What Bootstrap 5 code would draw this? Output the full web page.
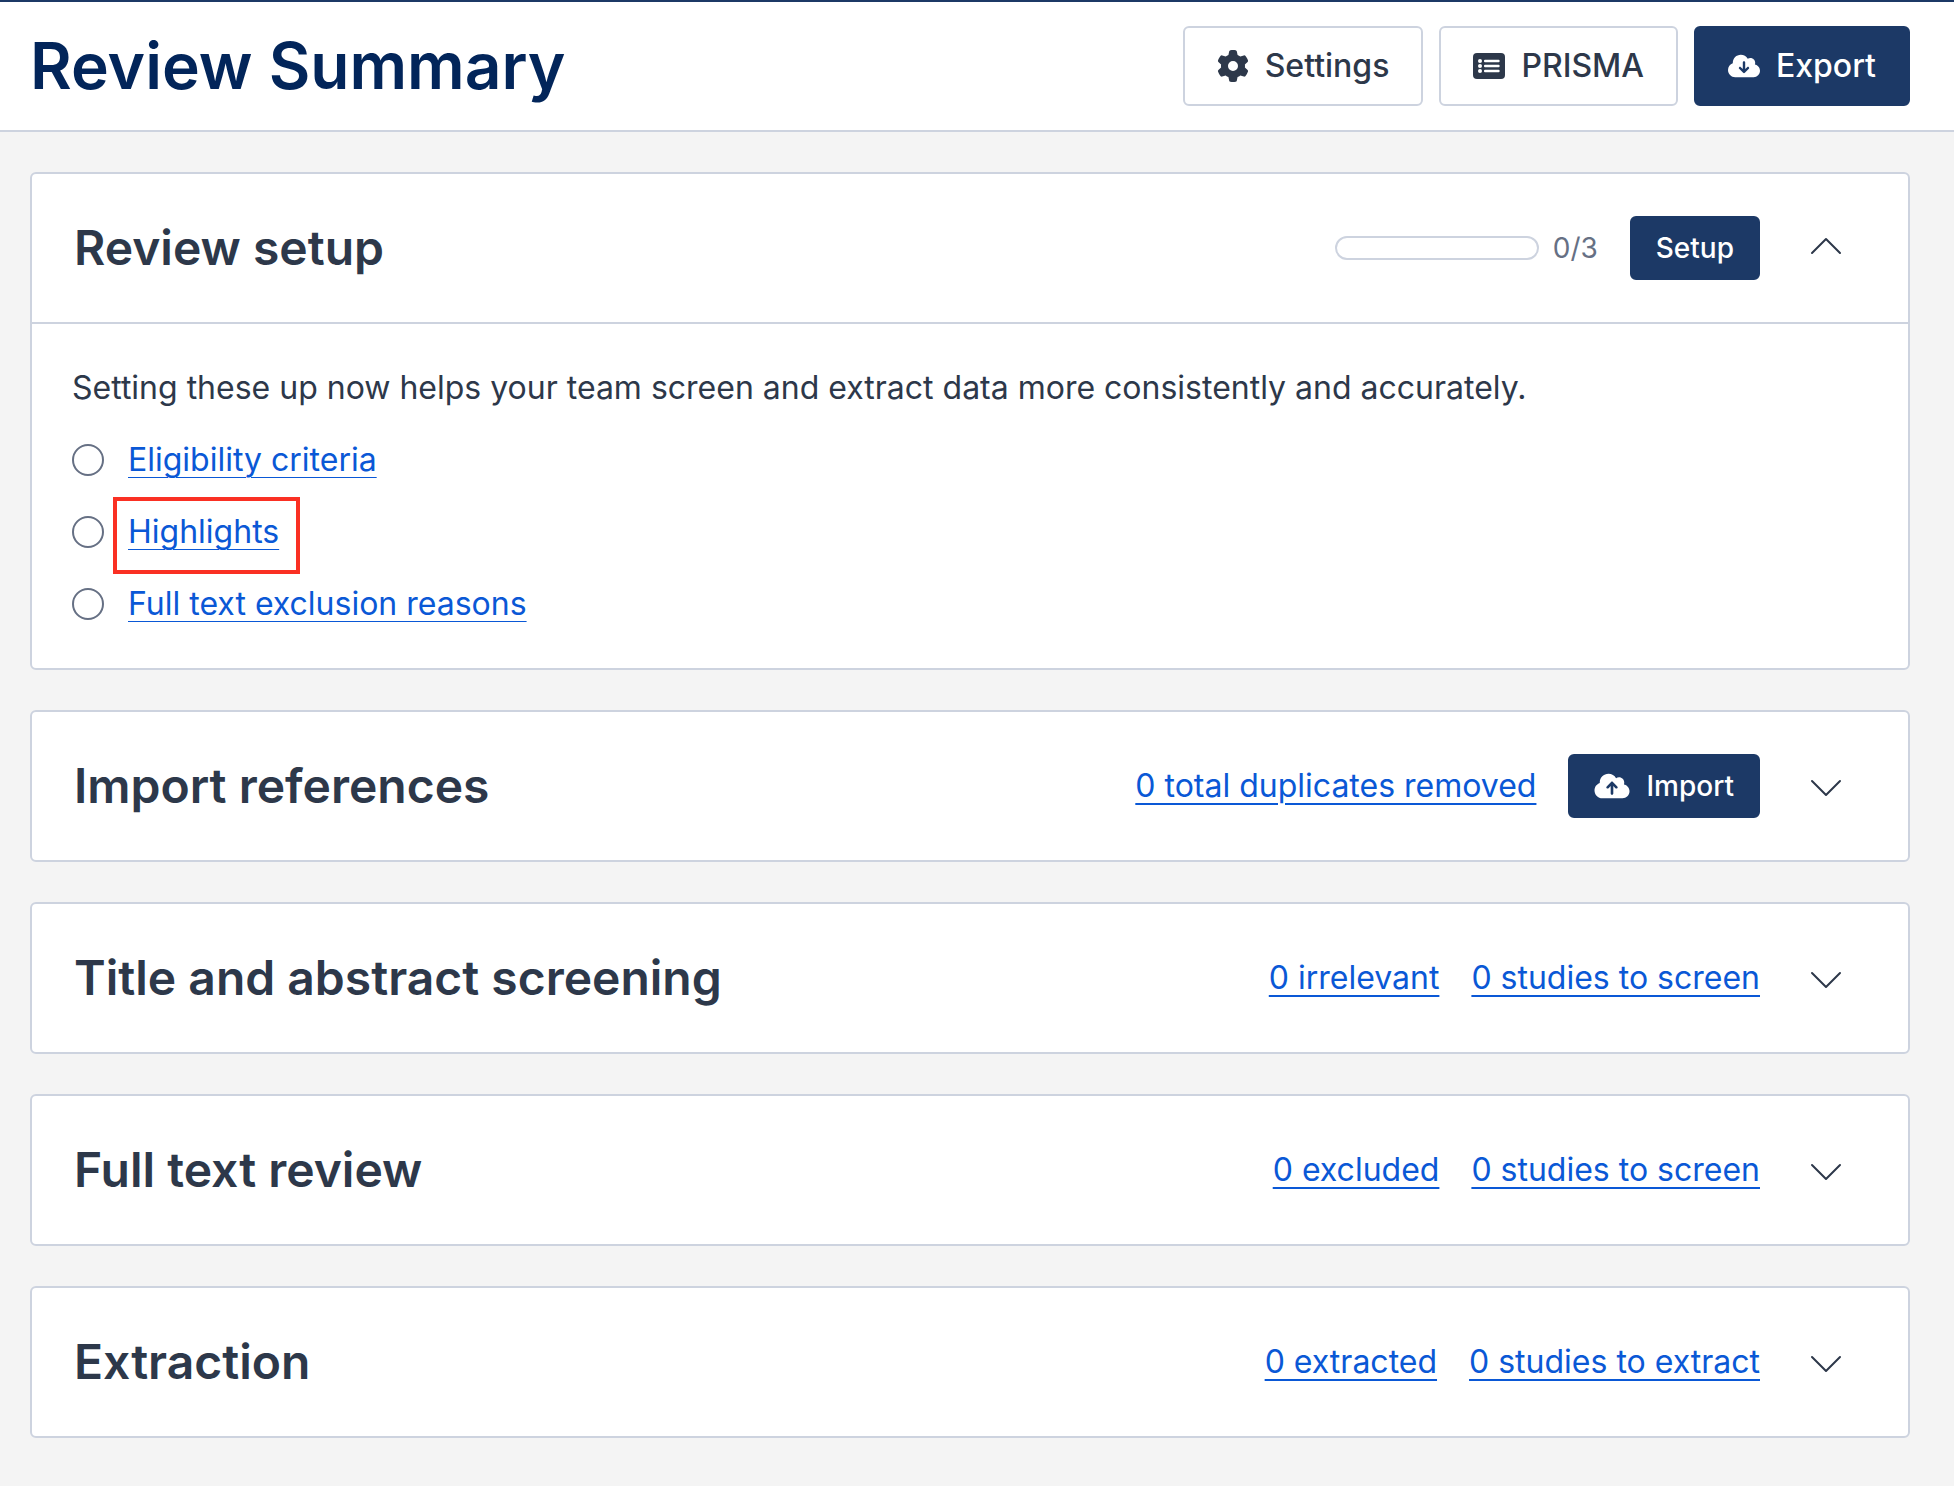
<!DOCTYPE html>
<html lang="en">
<head>
<meta charset="utf-8">
<meta name="viewport" content="width=device-width, initial-scale=1">
<title>Review Summary</title>
<link href="https://cdn.jsdelivr.net/npm/bootstrap@5.3.0/dist/css/bootstrap.min.css" rel="stylesheet">
<style>
  :root { --ink: #2d384a; --navy: #1c3966; --line: #cdd3df; --action: #0a58d6; }
  body { font-family: Inter, "Liberation Sans", sans-serif; font-size: 32px; line-height: 48px; color: var(--ink); background: #f4f4f4; }
  a { color: var(--action); }
  .page-head { border-top: 2px solid var(--navy); border-bottom: 2px solid var(--line); padding: 24px 44px 24px 30px; }
  .page-title { font-size: 64px; line-height: 80px; font-weight: 600; color: #02255a; }
  .page-body { padding: 40px 44px 40px 30px; gap: 40px; }
  .btn { --bs-btn-border-width: 2px; --bs-btn-border-radius: 6px; --bs-btn-font-weight: 500; --bs-btn-line-height: 36px; display: inline-flex; align-items: center; gap: 16px; white-space: nowrap; }
  .btn-tall { --bs-btn-font-size: 32px; --bs-btn-padding-x: 32px; --bs-btn-padding-y: 20px; }
  .btn-short { --bs-btn-font-size: 28px; --bs-btn-padding-x: 24px; --bs-btn-padding-y: 12px; }
  .btn-plain { --bs-btn-color: var(--ink); --bs-btn-bg: #fff; --bs-btn-border-color: var(--line); --bs-btn-hover-bg: #f3f5f9; --bs-btn-hover-border-color: var(--line); }
  .btn-navy { --bs-btn-color: #fff; --bs-btn-bg: var(--navy); --bs-btn-border-color: var(--navy); --bs-btn-hover-color: #fff; --bs-btn-hover-bg: #02255a; --bs-btn-hover-border-color: #02255a; }
  .stage { --bs-card-border-width: 2px; --bs-card-border-color: var(--line); --bs-card-border-radius: 6px; --bs-card-inner-border-radius: 4px; --bs-card-bg: #fff; --bs-card-color: var(--ink); }
  .stage-head { min-height: 148px; padding: 0 58px 0 42px; }
  .stage-title { font-size: 48px; line-height: 60px; font-weight: 600; }
  .stage-tools { gap: 32px; }
  .stage-tools a { text-decoration-thickness: 2px; text-underline-offset: 6px; }
  .stage-body { border-top: 2px solid var(--line); padding: 40px; }
  .tasks { gap: 24px; }
  .tasks li { gap: 24px; }
  .tasks a { text-decoration-thickness: 1px; text-underline-offset: 6px; }
  .called-out { position: relative; }
  .called-out::after { content: ""; position: absolute; inset: -11px -21px -18px -15px; border: 4px solid #fa3023; pointer-events: none; }
  .meter { gap: 14px; font-size: 28px; color: #667084; }
  .meter .progress { width: 204px; height: 24px; background: #fff; border: 2px solid var(--line); border-radius: 12px; }
  .toggler { width: 48px; height: 48px; margin-left: 10px; border: 0; padding: 0; background: none; color: var(--ink); display: flex; align-items: center; justify-content: center; }
  svg { display: block; flex: none; }
</style>
<script src="https://cdn.jsdelivr.net/npm/bootstrap@5.3.0/dist/js/bootstrap.bundle.min.js"></script>
</head>
<body>
<svg width="0" height="0" class="position-absolute" aria-hidden="true">
  <symbol id="up" viewBox="0 0 32 32"><path d="M2 21 16 7l14 14" fill="none" stroke="currentColor" stroke-width="2" stroke-linecap="round" stroke-linejoin="round"/></symbol>
  <symbol id="down" viewBox="0 0 32 32"><path d="M2 11l14 14L30 11" fill="none" stroke="currentColor" stroke-width="2" stroke-linecap="round" stroke-linejoin="round"/></symbol>
  <symbol id="todo" viewBox="0 0 32 32"><circle cx="16" cy="16" r="15" fill="none" stroke="#667084" stroke-width="2"/></symbol>
</svg>

<header class="page-head bg-white d-flex flex-wrap align-items-center justify-content-between gap-3">
  <h1 class="page-title mb-0">Review Summary</h1>
  <div class="d-flex flex-wrap gap-3">
    <button type="button" class="btn btn-tall btn-plain">
      <svg width="32" height="32" viewBox="0 0 512 512" fill="currentColor" aria-hidden="true"><path d="M495.900 166.600c3.200 8.700 .5 18.400-6.400 24.600l-43.300 39.400c1.100 8.300 1.700 16.800 1.700 25.400s-.6 17.100-1.700 25.400l43.300 39.400c6.900 6.200 9.600 15.900 6.400 24.600c-4.400 11.900-9.700 23.300-15.800 34.300l-4.700 8.100c-6.600 11-14 21.400-22.100 31.200c-5.900 7.200-15.700 9.600-24.500 6.800l-55.700-17.700c-13.400 10.300-28.200 18.900-44 25.400l-12.500 57.100c-2 9.100-9 16.300-18.200 17.800c-13.800 2.300-28 3.500-42.500 3.500s-28.700-1.200-42.500-3.500c-9.200-1.500-16.200-8.700-18.200-17.800l-12.500-57.100c-15.800-6.500-30.600-15.100-44-25.400L83.100 425.900c-8.800 2.800-18.600 .3-24.500-6.800c-8.100-9.800-15.500-20.200-22.100-31.200l-4.700-8.100c-6.100-11-11.400-22.400-15.800-34.300c-3.200-8.700-.5-18.400 6.400-24.600l43.300-39.400C64.600 273.100 64 264.600 64 256s.6-17.100 1.700-25.400L22.400 191.200c-6.900-6.200-9.600-15.900-6.400-24.600c4.400-11.900 9.700-23.300 15.800-34.300l4.700-8.100c6.600-11 14-21.400 22.100-31.200c5.900-7.200 15.700-9.600 24.500-6.800l55.700 17.700c13.400-10.300 28.200-18.900 44-25.400l12.500-57.100c2-9.100 9-16.300 18.200-17.800C227.300 1.200 241.500 0 256 0s28.700 1.200 42.500 3.500c9.200 1.500 16.200 8.700 18.200 17.800l12.500 57.100c15.800 6.500 30.600 15.100 44 25.400l55.700-17.700c8.800-2.800 18.600-.3 24.500 6.800c8.100 9.800 15.500 20.200 22.100 31.200l4.700 8.100c6.100 11 11.400 22.400 15.800 34.300zM256 336a80 80 0 1 0 0-160 80 80 0 1 0 0 160z"/></svg>
      Settings
    </button>
    <button type="button" class="btn btn-tall btn-plain">
      <svg width="32" height="26" viewBox="0 0 32 26" aria-hidden="true"><rect width="32" height="26" rx="4" fill="currentColor"/><g fill="#fff"><circle cx="7" cy="8" r="2"/><circle cx="7" cy="13" r="2"/><circle cx="7" cy="18" r="2"/><rect x="11" y="6.700" width="15.600" height="2.600" rx="1"/><rect x="11" y="11.700" width="15.600" height="2.600" rx="1"/><rect x="11" y="16.700" width="15.600" height="2.600" rx="1"/></g></svg>
      PRISMA
    </button>
    <button type="button" class="btn btn-tall btn-navy">
      <svg width="32" height="26" viewBox="0 0 640 512" fill="currentColor" aria-hidden="true"><path d="M144 480C64.500 480 0 415.500 0 336c0-62.800 40.200-116.200 96.200-135.900c-.1-2.700-.2-5.400-.2-8.100c0-88.400 71.600-160 160-160c59.300 0 111 32.200 138.700 80.200C409.900 102 428.300 96 448 96c53 0 96 43 96 96c0 12.200-2.300 23.800-6.400 34.600C596 238.400 640 290.100 640 352c0 70.700-57.300 128-128 128H144zm79-167l80 80c9.400 9.400 24.600 9.400 33.900 0l80-80c9.400-9.400 9.400-24.600 0-33.900s-24.600-9.400-33.900 0l-39 39V184c0-13.300-10.700-24-24-24s-24 10.700-24 24V318.100l-39-39c-9.400-9.400-24.600-9.400-33.900 0s-9.400 24.600 0 33.900z"/></svg>
      Export
    </button>
  </div>
</header>

<main class="page-body d-flex flex-column">
  <section class="card stage">
    <div class="stage-head d-flex align-items-center justify-content-between">
      <h2 class="stage-title mb-0">Review setup</h2>
      <div class="stage-tools d-flex align-items-center">
        <div class="meter d-flex align-items-center">
          <div class="progress" role="progressbar" aria-label="Setup progress" aria-valuenow="0" aria-valuemin="0" aria-valuemax="3"></div>
          <span>0/3</span>
        </div>
        <button type="button" class="btn btn-short btn-navy">Setup</button>
        <button type="button" class="toggler" aria-label="Collapse review setup" aria-expanded="true" data-bs-toggle="collapse" data-bs-target="#setup-body"><svg width="32" height="32"><use href="#up"/></svg></button>
      </div>
    </div>
    <div class="collapse show" id="setup-body">
      <div class="stage-body">
        <p class="mb-4">Setting these up now helps your team screen and extract data more consistently and accurately.</p>
        <ul class="tasks list-unstyled d-flex flex-column mb-0">
          <li class="d-flex align-items-center"><svg width="32" height="32" aria-hidden="true"><use href="#todo"/></svg><a href="#">Eligibility criteria</a></li>
          <li class="d-flex align-items-center"><svg width="32" height="32" aria-hidden="true"><use href="#todo"/></svg><a href="#" class="called-out">Highlights</a></li>
          <li class="d-flex align-items-center"><svg width="32" height="32" aria-hidden="true"><use href="#todo"/></svg><a href="#">Full text exclusion reasons</a></li>
        </ul>
      </div>
    </div>
  </section>

  <section class="card stage">
    <div class="stage-head d-flex align-items-center justify-content-between">
      <h2 class="stage-title mb-0">Import references</h2>
      <div class="stage-tools d-flex align-items-center">
        <a href="#">0 total duplicates removed</a>
        <button type="button" class="btn btn-short btn-navy">
          <svg width="36" height="28" viewBox="0 0 640 512" fill="currentColor" aria-hidden="true"><path d="M144 480C64.500 480 0 415.500 0 336c0-62.800 40.200-116.200 96.200-135.900c-.1-2.700-.2-5.400-.2-8.100c0-88.400 71.600-160 160-160c59.300 0 111 32.200 138.700 80.200C409.900 102 428.300 96 448 96c53 0 96 43 96 96c0 12.200-2.300 23.800-6.400 34.600C596 238.400 640 290.100 640 352c0 70.700-57.300 128-128 128H144zm79-217c-9.400 9.400-9.400 24.600 0 33.900s24.600 9.400 33.900 0l39-39V392c0 13.300 10.700 24 24 24s24-10.700 24-24V257.900l39 39c9.400 9.400 24.600 9.400 33.900 0s9.400-24.600 0-33.900l-80-80c-9.400-9.400-24.600-9.400-33.900 0l-80 80z"/></svg>
          Import
        </button>
        <button type="button" class="toggler" aria-label="Expand import references" aria-expanded="false"><svg width="32" height="32"><use href="#down"/></svg></button>
      </div>
    </div>
  </section>

  <section class="card stage">
    <div class="stage-head d-flex align-items-center justify-content-between">
      <h2 class="stage-title mb-0">Title and abstract screening</h2>
      <div class="stage-tools d-flex align-items-center">
        <a href="#">0 irrelevant</a>
        <a href="#">0 studies to screen</a>
        <button type="button" class="toggler" aria-label="Expand title and abstract screening" aria-expanded="false"><svg width="32" height="32"><use href="#down"/></svg></button>
      </div>
    </div>
  </section>

  <section class="card stage">
    <div class="stage-head d-flex align-items-center justify-content-between">
      <h2 class="stage-title mb-0">Full text review</h2>
      <div class="stage-tools d-flex align-items-center">
        <a href="#">0 excluded</a>
        <a href="#">0 studies to screen</a>
        <button type="button" class="toggler" aria-label="Expand full text review" aria-expanded="false"><svg width="32" height="32"><use href="#down"/></svg></button>
      </div>
    </div>
  </section>

  <section class="card stage">
    <div class="stage-head d-flex align-items-center justify-content-between">
      <h2 class="stage-title mb-0">Extraction</h2>
      <div class="stage-tools d-flex align-items-center">
        <a href="#">0 extracted</a>
        <a href="#">0 studies to extract</a>
        <button type="button" class="toggler" aria-label="Expand extraction" aria-expanded="false"><svg width="32" height="32"><use href="#down"/></svg></button>
      </div>
    </div>
  </section>
</main>
</body>
</html>
